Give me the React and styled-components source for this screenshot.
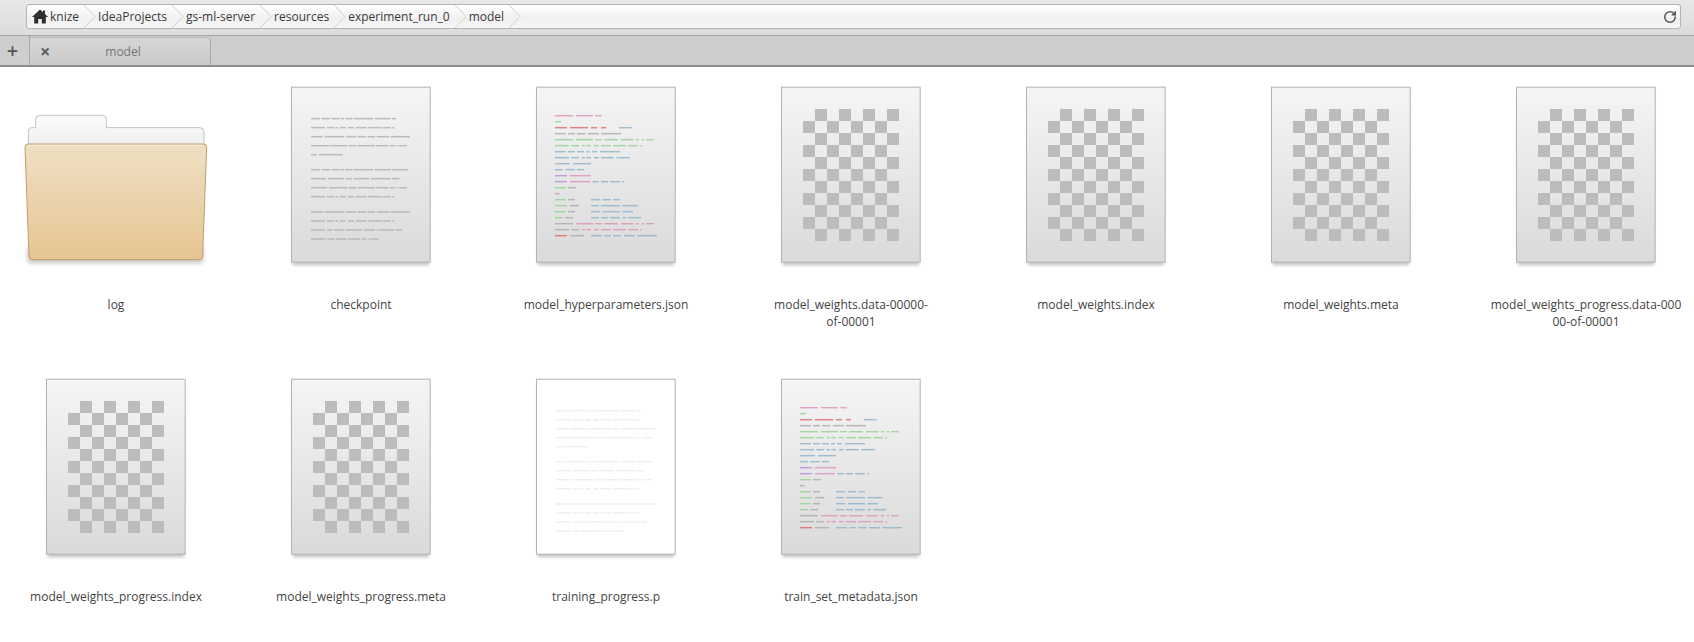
import React from 'react';
import styled, { createGlobalStyle } from 'styled-components';
import { RotateCw } from 'lucide-react';

const GlobalStyle = createGlobalStyle`
  html, body {
    margin: 0;
    background: #fff;
    overflow: hidden;
  }
  body {
    font-family: "Open Sans", "Liberation Sans", sans-serif;
  }
`;

const Toolbar = styled.div`
  height: 36px;
  box-sizing: border-box;
  padding: 4px 13px 0 26px;
  background: linear-gradient(#e8e8e8, #dcdcdc);
  border-bottom: 1px solid #a6a6a6;
`;

const Address = styled.div`
  height: 25px;
  box-sizing: border-box;
  display: flex;
  align-items: center;
  padding: 0 5px;
  background: linear-gradient(#fff, #f0f0f0 60%, #f6f6f6);
  border: 1px solid #b4b4b4;
  border-radius: 3px;
`;

const Crumb = styled.span`
  font-size: 12px;
  color: #3a3a3a;
  white-space: nowrap;
`;

const Chevron = styled.svg`
  width: 14px;
  height: 23px;
  margin: 0 1px 0 4px;
  flex: none;
`;

const HomeIcon = styled.svg`
  width: 16px;
  height: 15px;
  margin-right: 2px;
  flex: none;
`;

const Reload = styled(RotateCw)`
  margin-left: auto;
  margin-right: -2px;
  color: #555;
`;

const TabBar = styled.div`
  height: 31px;
  box-sizing: border-box;
  display: flex;
  background: #cecece;
  border-bottom: 2px solid #8e8e8e;
`;

const NewTab = styled.div`
  width: 30px;
  box-sizing: border-box;
  padding-right: 4px;
  display: flex;
  align-items: center;
  justify-content: center;
  font-size: 20px;
  font-weight: 600;
  color: #555;
  border-right: 1px solid #a8a8a8;
`;

const Tab = styled.div`
  width: 181px;
  box-sizing: border-box;
  position: relative;
  display: flex;
  align-items: center;
  justify-content: center;
  margin-top: 1px;
  padding-left: 6px;
  font-size: 12px;
  color: #777;
  background: linear-gradient(#d6d6d6, #cbcbcb);
  border-right: 1px solid #a8a8a8;
  border-top: 1px solid #b4b4b4;
  border-top-right-radius: 4px;
`;

const CloseTab = styled.span`
  position: absolute;
  left: 10px;
  top: 1px;
  font-size: 18px;
  font-weight: 700;
  color: #5d5d5d;
`;

const Files = styled.div`
  display: grid;
  grid-template-columns: repeat(7, 226px);
  grid-auto-rows: 292px;
  column-gap: 19px;
  padding: 13px 0 0 2px;
`;

const FileItem = styled.div`
  display: flex;
  flex-direction: column;
  align-items: center;
`;

const Label = styled.div`
  margin-top: 26px;
  width: 226px;
  box-sizing: border-box;
  padding-left: 2px;
  font-size: 12px;
  line-height: 17px;
  color: #444;
  text-align: center;
  white-space: pre-line;
`;

const Icon = styled.svg`
  height: 190px;
  flex: none;
  display: block;
`;

const plainLines = [
  [116, '93-120,125-150,155-180,183-192,196-218,222-280,285-332,336-348'],
  [143, '93-135,141-162,166-175,180-197,204-222,227-260,265-305,308-332,336-343'],
  [170, '93-128,133-193,198-228,232-258,262-285,290-328,332-390'],
  [197, '93-147,150-203,207-228,232-285,288-325,329-345,349-355,358-380'],
  [224, '93-110,117-188'],
  [269, '93-120,125-150,155-180,183-192,196-218,222-280,285-332,336-385'],
  [296, '93-138,144-192,197-216,221-268,273-332,336-358'],
  [323, '93-142,148-202,207-228,233-284,288-325,329-345,349-355,358-380'],
  [350, '93-135,141-162,166-175,180-197,204-222,227-260,265-305,308-332,336-343'],
  [396, '93-128,133-193,198-228,232-258,262-285,290-328,332-390'],
  [423, '93-135,141-162,166-175,180-197,204-222,227-260,265-305,308-332,336-343'],
  [450, '93-135,142-158,162-194,198-246,252-285,290-296,300-342,346-366'],
  [477, '93-136,142-164,168-200,204-240,245-260,265-272,274-296'],
];

const colors = {
  p: '#dd97bd',
  g: '#97d597',
  r: '#e26f6f',
  k: '#aeaeae',
  b: '#93b5cd',
  v: '#b794da',
};

const codeLines = [
  [107, 'p', '90-144,153-204,211-230'],
  [125, 'g', '90-108'],
  [143, 'r', '90-126,135-189,198-216,228-243', 'b', '282-320'],
  [161, 'k', '90-122,129-150,156-181,189-222,228-288'],
  [179, 'g', '90-144,153-204,211-231,238-279,288-325,333-342,351-357,364-387'],
  [197, 'g', '90-132,139-162,171-180,184-198,207-221,228-258,265-303,310-339,346-351'],
  [215, 'b', '90-122,129-150,156-177,184-194,201-216,225-285'],
  [233, 'b', '90-132,139-162,171-180,184-198,207-221,228-266,274-315'],
  [251, 'b', '90-135,144-198'],
  [269, 'b', '90-113,121-150,156-177'],
  [287, 'v', '90-126', 'p', '135-198'],
  [305, 'v', '90-126', 'p', '135-195', 'b', '202-222,228-249,255-285,292-297'],
  [323, 'g', '90-123', 'k', '129-153'],
  [341, 'k', '90-104'],
  [359, 'g', '90-122', 'k', '129-150', 'b', '198-226,234-258,265-285'],
  [377, 'g', '90-126', 'k', '135-162', 'b', '198-222,228-285,292-338'],
  [395, 'g', '90-122', 'k', '129-150', 'b', '198-226,234-285,292-324'],
  [413, 'g', '90-113', 'k', '121-144', 'b', '198-222,228-249,255-285,292-303,310-348'],
  [431, 'k', '90-144', 'p', '153-204,211-231,238-279,288-325,333-342,351-357,364-387'],
  [449, 'k', '90-132,139-162', 'p', '171-180,184-198,207-221,228-258,265-303,310-339,346-351'],
  [467, 'r', '90-126', 'k', '135-177', 'b', '198-231,238-258,264-288,297-330,337-396'],
];

function Dashes({ y, spans, color }) {
  return spans.split(',').map(s => {
    const [a, b] = s.split('-');
    return <line key={s} x1={a} x2={b} y1={y} y2={y} stroke={color} strokeWidth="4.5" opacity="0.85" />;
  });
}

function DocPage({ id, white, children }) {
  return (
    <Icon width="160" viewBox="0 0 480 570">
      <defs>
        <linearGradient id={id} x1="0" y1="0" x2="0" y2="1">
          <stop offset="0" stopColor={white ? '#fff' : '#f5f5f5'} />
          <stop offset="1" stopColor={white ? '#fff' : '#dadada'} />
        </linearGradient>
        <filter id={id + '-blur'} x="-10%" y="-10%" width="120%" height="120%">
          <feGaussianBlur stdDeviation="5" />
        </filter>
      </defs>
      <rect x="38" y="30" width="409" height="526" fill="#000" opacity="0.22" filter={`url(#${id}-blur)`} />
      <rect x="34.5" y="21.5" width="416" height="525" fill={`url(#${id})`} stroke="#b3b3b3" strokeWidth="3" />
      {children}
    </Icon>
  );
}

function TextDoc({ id, white }) {
  return (
    <DocPage id={id} white={white}>
      {plainLines.map(([y, spans]) => (
        <Dashes key={y} y={y} spans={spans} color={white ? '#ececec' : '#b2b2b2'} />
      ))}
    </DocPage>
  );
}

function CodeDoc({ id }) {
  return (
    <DocPage id={id}>
      {codeLines.map(([y, ...parts]) =>
        parts.map((part, i) =>
          i % 2 === 0 ? (
            <Dashes key={y + part} y={y} spans={parts[i + 1]} color={colors[part]} />
          ) : null
        )
      )}
    </DocPage>
  );
}

function BinaryDoc({ id }) {
  const squares = [];
  for (let row = 0; row < 11; row++) {
    const start = row % 2 === 0 ? 135 : 99;
    for (let col = 0; col < 4; col++) {
      squares.push(<rect key={row + '-' + col} x={start + col * 72} y={87 + row * 36} width="36" height="36" fill="#bcbcbc" />);
    }
  }
  return <DocPage id={id}>{squares}</DocPage>;
}

function FolderIcon() {
  return (
    <Icon width="200" viewBox="15 -30 600 570">
      <defs>
        <linearGradient id="folderFront" x1="0" y1="0" x2="0" y2="1">
          <stop offset="0" stopColor="#efe0c4" />
          <stop offset="1" stopColor="#e6c591" />
        </linearGradient>
        <linearGradient id="folderBack" x1="0" y1="0" x2="0" y2="1">
          <stop offset="0" stopColor="#fbfbfb" />
          <stop offset="1" stopColor="#f0f0f0" />
        </linearGradient>
        <filter id="folderBlur" x="-10%" y="-20%" width="120%" height="140%">
          <feGaussianBlur stdDeviation="6" />
        </filter>
      </defs>
      <rect x="52" y="470" width="528" height="50" rx="10" fill="#000" opacity="0.22" filter="url(#folderBlur)" />
      <path
        d="M55 165 V125 Q55 113 67 113 H77 V88 Q77 76 89 76 H277 Q289 76 289 88 V113 H570 Q582 113 582 125 V165 Z"
        fill="url(#folderBack)"
        stroke="#c2c2c2"
        strokeWidth="3"
      />
      <path
        d="M54 162 H580 Q591 162 590 173 L578 498 Q578 509 566 509 H69 Q57 509 57 498 L45 173 Q44 162 54 162 Z"
        fill="url(#folderFront)"
        stroke="#bf9f64"
        strokeWidth="3"
      />
      <path d="M56 166 H578" stroke="#f6ecd9" strokeWidth="3" fill="none" />
    </Icon>
  );
}

const crumbs = ['IdeaProjects', 'gs-ml-server', 'resources', 'experiment_run_0', 'model'];

const files = [
  { name: 'log', kind: 'folder' },
  { name: 'checkpoint', kind: 'text' },
  { name: 'model_hyperparameters.json', kind: 'code' },
  { name: 'model_weights.data-00000-\nof-00001', kind: 'binary' },
  { name: 'model_weights.index', kind: 'binary' },
  { name: 'model_weights.meta', kind: 'binary' },
  { name: 'model_weights_progress.data-000\n00-of-00001', kind: 'binary' },
  { name: 'model_weights_progress.index', kind: 'binary' },
  { name: 'model_weights_progress.meta', kind: 'binary' },
  { name: 'training_progress.p', kind: 'blank' },
  { name: 'train_set_metadata.json', kind: 'code' },
];

function fileIcon(kind, id) {
  if (kind === 'folder') return <FolderIcon />;
  if (kind === 'text') return <TextDoc id={id} />;
  if (kind === 'blank') return <TextDoc id={id} white />;
  if (kind === 'code') return <CodeDoc id={id} />;
  return <BinaryDoc id={id} />;
}

function CrumbArrow() {
  return (
    <Chevron viewBox="0 0 14 23">
      <polyline points="1,0 12,11.5 1,23" fill="none" stroke="#cfcfcf" strokeWidth="1" />
    </Chevron>
  );
}

export default function App() {
  return (
    <>
      <GlobalStyle />
      <Toolbar>
        <Address>
          <HomeIcon viewBox="0 0 16 15">
            <path d="M8 0.5 L11 3.2 V1.5 H13 V5 L16 8 H13.8 V14.5 H9.8 V10 H6.2 V14.5 H2.2 V8 H0 Z" fill="#2f2f2f" />
          </HomeIcon>
          <Crumb>knize</Crumb>
          {crumbs.map(c => (
            <React.Fragment key={c}>
              <CrumbArrow />
              <Crumb>{c}</Crumb>
            </React.Fragment>
          ))}
          <CrumbArrow />
          <Reload size={14} strokeWidth={2.6} />
        </Address>
      </Toolbar>
      <TabBar>
        <NewTab>+</NewTab>
        <Tab>
          <CloseTab>×</CloseTab>
          model
        </Tab>
      </TabBar>
      <Files>
        {files.map((f, i) => (
          <FileItem key={f.name}>
            {fileIcon(f.kind, 'doc' + i)}
            <Label>{f.name}</Label>
          </FileItem>
        ))}
      </Files>
    </>
  );
}
